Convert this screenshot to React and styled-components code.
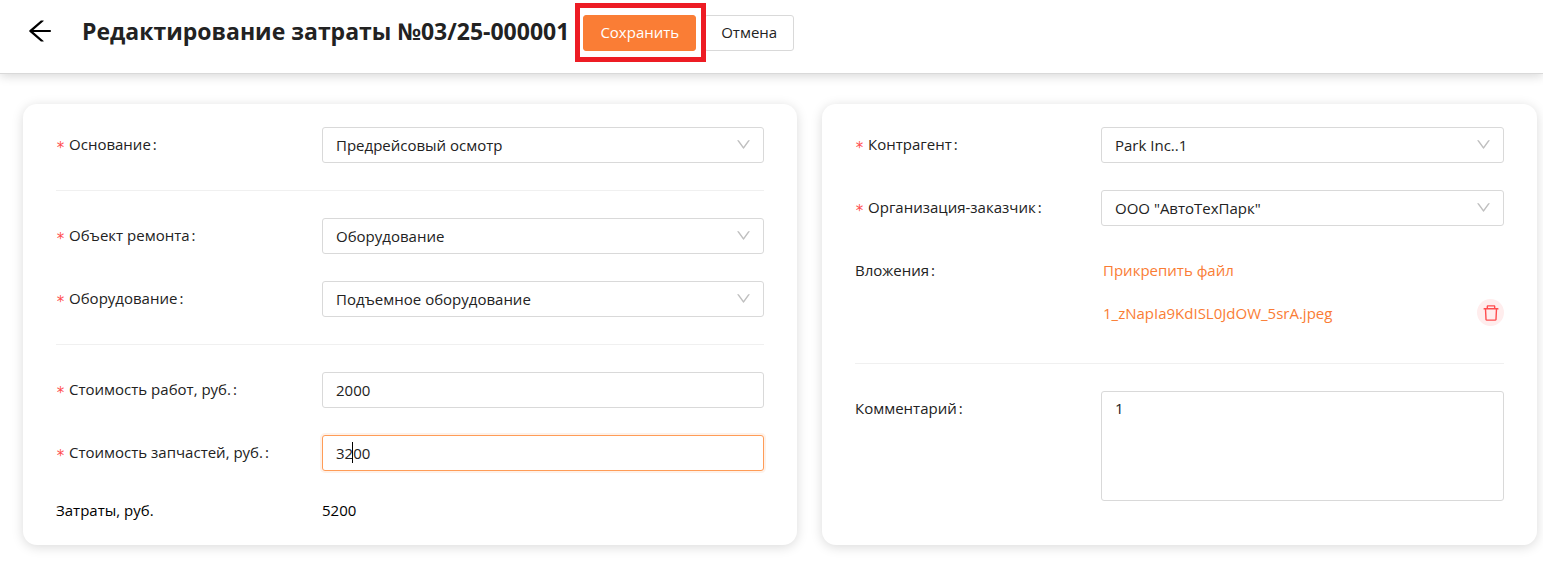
import React, { useState } from 'react';
import styled, { createGlobalStyle } from 'styled-components';
import { AiOutlineArrowLeft, AiOutlineDelete, AiOutlineDown } from 'react-icons/ai';

const App = () => {
  const [works, setWorks] = useState('2000');
  const [parts, setParts] = useState('3200');
  const total = Number(works) + Number(parts);

  return (
    <>
      <GlobalStyle />
      <Header>
        <BackButton type="button" aria-label="Назад">
          <AiOutlineArrowLeft />
        </BackButton>
        <Title>Редактирование затраты №03/25-000001</Title>
        <Actions>
          <Highlight>
            <Button type="submit" form="expense" $primary>Сохранить</Button>
          </Highlight>
          <Button type="button">Отмена</Button>
        </Actions>
      </Header>

      <Form id="expense" onSubmit={(e) => e.preventDefault()}>
        <Card>
          <SelectField id="reason" label="Основание" value="Предрейсовый осмотр" />
          <Divider />
          <SelectField id="object" label="Объект ремонта" value="Оборудование" />
          <SelectField id="equipment" label="Оборудование" value="Подъемное оборудование" />
          <Divider />
          <Row>
            <Label htmlFor="works" $required>Стоимость работ, руб.</Label>
            <Input id="works" value={works} onChange={(e) => setWorks(e.target.value)} />
          </Row>
          <Row>
            <Label htmlFor="parts" $required>Стоимость запчастей, руб.</Label>
            <Control>
              <Input id="parts" value={parts} onChange={(e) => setParts(e.target.value)} $active />
              <Caret />
            </Control>
          </Row>
          <Row>
            <Total>Затраты, руб.</Total>
            <Total>{total}</Total>
          </Row>
        </Card>

        <Card $labelWidth="246px">
          <SelectField id="contractor" label="Контрагент" value="Park Inc..1" />
          <SelectField id="customer" label="Организация-заказчик" value={'ООО "АвтоТехПарк"'} />
          <Row>
            <Label as="span">Вложения</Label>
            <div>
              <AttachButton type="button">Прикрепить файл</AttachButton>
              <FileRow>
                <FileLink href="#file">1_zNapIa9KdISL0JdOW_5srA.jpeg</FileLink>
                <DeleteButton type="button" aria-label="Удалить файл">
                  <AiOutlineDelete />
                </DeleteButton>
              </FileRow>
            </div>
          </Row>
          <Divider />
          <Row>
            <Label htmlFor="comment">Комментарий</Label>
            <TextArea id="comment" defaultValue="1" />
          </Row>
        </Card>
      </Form>
    </>
  );
};

const SelectField = ({ id, label, value }) => {
  return (
    <Row>
      <Label htmlFor={id} $required>{label}</Label>
      <Control>
        <Select id={id} defaultValue={value}>
          <option>{value}</option>
        </Select>
        <Arrow />
      </Control>
    </Row>
  );
};

const GlobalStyle = createGlobalStyle`
  * {
    box-sizing: border-box;
  }

  body {
    margin: 0;
    background: #fff;
    color: #222;
    font-family: "Segoe UI", "Open Sans", "Noto Sans", sans-serif;
    font-size: 15px;
    line-height: 24px;
  }

  button, input, select, textarea {
    font: inherit;
    color: inherit;
  }
`;

const Header = styled.header`
  display: flex;
  align-items: flex-start;
  padding: 15px 24px 22px;
  border-bottom: 1px solid #d9d9d9;
  box-shadow: 0 2px 10px rgba(0, 0, 0, 0.16);
`;

const BackButton = styled.button`
  display: flex;
  align-items: center;
  height: 32px;
  padding: 0;
  margin: 0 27px 0 1px;
  border: none;
  background: none;
  color: #000;
  font-size: 30px;
  cursor: pointer;
`;

const Title = styled.h1`
  margin: 0 14px 0 0;
  font-size: 23px;
  line-height: 32px;
  font-weight: 700;
`;

const Actions = styled.div`
  display: flex;
  gap: 8px;
`;

const Highlight = styled.div`
  position: relative;

  &::after {
    content: '';
    position: absolute;
    z-index: 1;
    inset: -12px -10px -11px -8px;
    border: 5px solid #ed1c24;
    pointer-events: none;
  }
`;

const Button = styled.button`
  height: 36px;
  padding: 0 16px 2px;
  border: 1px solid ${(props) => (props.$primary ? '#fa7d35' : '#d9d9d9')};
  border-radius: 3px;
  background: ${(props) => (props.$primary ? '#fa7d35' : '#fff')};
  color: ${(props) => (props.$primary ? '#fff' : '#222')};
  cursor: pointer;
`;

const Form = styled.form`
  display: grid;
  grid-template-columns: 774fr 715fr;
  gap: 25px;
  padding: 30px 6px 25px 23px;
`;

const Card = styled.section`
  --label-width: ${(props) => props.$labelWidth || '266px'};
  display: flex;
  flex-direction: column;
  gap: 27px;
  padding: 23px 33px;
  border-radius: 14px;
  box-shadow: 0 2px 12px rgba(0, 0, 0, 0.15);
`;

const Row = styled.div`
  display: grid;
  grid-template-columns: var(--label-width) 1fr;
`;

const Label = styled.label`
  line-height: 34px;

  &::before {
    content: ${(props) => (props.$required ? "'*'" : 'none')};
    margin-right: 4px;
    color: #ff4d4f;
    font-family: "DejaVu Sans Mono", monospace;
    line-height: 1;
    vertical-align: -3px;
  }

  &::after {
    content: ':';
    margin-left: 2px;
  }
`;

const Control = styled.div`
  position: relative;
`;

const Input = styled.input`
  display: block;
  width: 100%;
  height: 36px;
  padding: 0 13px;
  border: 1px solid ${(props) => (props.$active ? '#ff9c57' : '#d9d9d9')};
  border-radius: 3px;
  background: #fff;
  box-shadow: ${(props) => (props.$active ? '0 0 0 2px rgba(250, 125, 53, 0.1)' : 'none')};
  outline: none;
`;

const Select = styled(Input).attrs({ as: 'select' })`
  appearance: none;
  cursor: pointer;
`;

const Arrow = styled(AiOutlineDown)`
  position: absolute;
  top: 9px;
  right: 12px;
  color: #bfbfbf;
  font-size: 17px;
  pointer-events: none;
`;

const Caret = styled.span`
  position: absolute;
  top: 7px;
  left: 30px;
  width: 1px;
  height: 21px;
  background: #000;
`;

const Total = styled.span`
  color: #000;
`;

const Divider = styled.hr`
  width: 100%;
  height: 1px;
  margin: 0;
  border: none;
  background: #f0f0f0;
`;

const AttachButton = styled.button`
  display: block;
  height: 36px;
  padding: 0 2px 2px;
  border: none;
  background: none;
  color: #fa7d35;
  cursor: pointer;
`;

const FileRow = styled.div`
  display: flex;
  align-items: center;
  justify-content: space-between;
  height: 47px;
  padding-left: 2px;
`;

const FileLink = styled.a`
  color: #fa7d35;
  text-decoration: none;
`;

const DeleteButton = styled.button`
  display: flex;
  align-items: center;
  justify-content: center;
  width: 27px;
  height: 27px;
  padding: 0;
  border: none;
  border-radius: 50%;
  background: #ffeded;
  color: #ff4d4f;
  font-size: 20px;
  cursor: pointer;
`;

const TextArea = styled.textarea`
  display: block;
  width: 100%;
  height: 110px;
  padding: 4px 13px;
  border: 1px solid #d9d9d9;
  border-radius: 3px;
  outline: none;
  resize: none;
`;

export default App;
